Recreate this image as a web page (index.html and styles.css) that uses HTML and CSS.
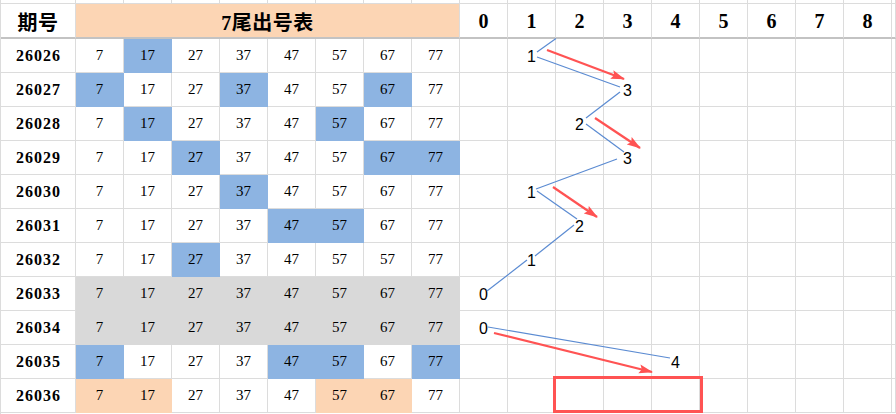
FILE: index.html
```html
<!DOCTYPE html>
<html lang="zh">
<head>
<meta charset="utf-8">
<title>7尾出号表</title>
<link rel="stylesheet" href="styles.css">
</head>
<body>
<div class="page">
  <div class="sheet">
    <div class="c t"></div><div class="c t"></div><div class="c t"></div><div class="c t"></div><div class="c t"></div><div class="c t"></div><div class="c t"></div><div class="c t"></div><div class="c t"></div><div class="c t"></div><div class="c t"></div><div class="c t"></div><div class="c t"></div><div class="c t"></div><div class="c t"></div><div class="c t"></div><div class="c t"></div><div class="c t"></div><div class="c t"></div>

    <div class="c h hz">期号</div><div class="c h hz o ttl">7尾出号表</div><div class="c h">0</div><div class="c h">1</div><div class="c h">2</div><div class="c h">3</div><div class="c h">4</div><div class="c h">5</div><div class="c h">6</div><div class="c h">7</div><div class="c h">8</div><div class="c h"></div>

    <div class="c lbl">26026</div><div class="c n">7</div><div class="c n b">17</div><div class="c n">27</div><div class="c n">37</div><div class="c n">47</div><div class="c n">57</div><div class="c n">67</div><div class="c n">77</div><div class="c ch"></div><div class="c ch">1</div><div class="c ch"></div><div class="c ch"></div><div class="c ch"></div><div class="c ch"></div><div class="c ch"></div><div class="c ch"></div><div class="c ch"></div><div class="c"></div>

    <div class="c lbl">26027</div><div class="c n b">7</div><div class="c n">17</div><div class="c n">27</div><div class="c n b">37</div><div class="c n">47</div><div class="c n">57</div><div class="c n b">67</div><div class="c n">77</div><div class="c ch"></div><div class="c ch"></div><div class="c ch"></div><div class="c ch">3</div><div class="c ch"></div><div class="c ch"></div><div class="c ch"></div><div class="c ch"></div><div class="c ch"></div><div class="c"></div>

    <div class="c lbl">26028</div><div class="c n">7</div><div class="c n b">17</div><div class="c n">27</div><div class="c n">37</div><div class="c n">47</div><div class="c n b">57</div><div class="c n">67</div><div class="c n">77</div><div class="c ch"></div><div class="c ch"></div><div class="c ch">2</div><div class="c ch"></div><div class="c ch"></div><div class="c ch"></div><div class="c ch"></div><div class="c ch"></div><div class="c ch"></div><div class="c"></div>

    <div class="c lbl">26029</div><div class="c n">7</div><div class="c n">17</div><div class="c n b">27</div><div class="c n">37</div><div class="c n">47</div><div class="c n">57</div><div class="c n b">67</div><div class="c n b">77</div><div class="c ch"></div><div class="c ch"></div><div class="c ch"></div><div class="c ch">3</div><div class="c ch"></div><div class="c ch"></div><div class="c ch"></div><div class="c ch"></div><div class="c ch"></div><div class="c"></div>

    <div class="c lbl">26030</div><div class="c n">7</div><div class="c n">17</div><div class="c n">27</div><div class="c n b">37</div><div class="c n">47</div><div class="c n">57</div><div class="c n">67</div><div class="c n">77</div><div class="c ch"></div><div class="c ch">1</div><div class="c ch"></div><div class="c ch"></div><div class="c ch"></div><div class="c ch"></div><div class="c ch"></div><div class="c ch"></div><div class="c ch"></div><div class="c"></div>

    <div class="c lbl">26031</div><div class="c n">7</div><div class="c n">17</div><div class="c n">27</div><div class="c n">37</div><div class="c n b">47</div><div class="c n b">57</div><div class="c n">67</div><div class="c n">77</div><div class="c ch"></div><div class="c ch"></div><div class="c ch">2</div><div class="c ch"></div><div class="c ch"></div><div class="c ch"></div><div class="c ch"></div><div class="c ch"></div><div class="c ch"></div><div class="c"></div>

    <div class="c lbl">26032</div><div class="c n">7</div><div class="c n">17</div><div class="c n b">27</div><div class="c n">37</div><div class="c n">47</div><div class="c n">57</div><div class="c n">57</div><div class="c n">77</div><div class="c ch"></div><div class="c ch">1</div><div class="c ch"></div><div class="c ch"></div><div class="c ch"></div><div class="c ch"></div><div class="c ch"></div><div class="c ch"></div><div class="c ch"></div><div class="c"></div>

    <div class="c lbl">26033</div><div class="c n g">7</div><div class="c n g">17</div><div class="c n g">27</div><div class="c n g">37</div><div class="c n g">47</div><div class="c n g">57</div><div class="c n g">67</div><div class="c n g">77</div><div class="c ch">0</div><div class="c ch"></div><div class="c ch"></div><div class="c ch"></div><div class="c ch"></div><div class="c ch"></div><div class="c ch"></div><div class="c ch"></div><div class="c ch"></div><div class="c"></div>

    <div class="c lbl">26034</div><div class="c n g">7</div><div class="c n g">17</div><div class="c n g">27</div><div class="c n g">37</div><div class="c n g">47</div><div class="c n g">57</div><div class="c n g">67</div><div class="c n g">77</div><div class="c ch">0</div><div class="c ch"></div><div class="c ch"></div><div class="c ch"></div><div class="c ch"></div><div class="c ch"></div><div class="c ch"></div><div class="c ch"></div><div class="c ch"></div><div class="c"></div>

    <div class="c lbl">26035</div><div class="c n b">7</div><div class="c n">17</div><div class="c n">27</div><div class="c n">37</div><div class="c n b">47</div><div class="c n b">57</div><div class="c n">67</div><div class="c n b">77</div><div class="c ch"></div><div class="c ch"></div><div class="c ch"></div><div class="c ch"></div><div class="c ch">4</div><div class="c ch"></div><div class="c ch"></div><div class="c ch"></div><div class="c ch"></div><div class="c"></div>

    <div class="c lbl">26036</div><div class="c n o">7</div><div class="c n o">17</div><div class="c n">27</div><div class="c n">37</div><div class="c n">47</div><div class="c n o">57</div><div class="c n o">67</div><div class="c n">77</div><div class="c ch"></div><div class="c ch"></div><div class="c ch"></div><div class="c ch"></div><div class="c ch"></div><div class="c ch"></div><div class="c ch"></div><div class="c ch"></div><div class="c ch"></div><div class="c"></div>
  </div>

  <svg class="overlay" width="896" height="414" viewBox="0 0 896 414" xmlns="http://www.w3.org/2000/svg">
    <defs>
      <marker id="ah" markerUnits="userSpaceOnUse" markerWidth="14" markerHeight="10" refX="13" refY="5" orient="auto">
        <path d="M0,0.5 L14,5 L0,9.5 L2.5,5 Z" fill="#ff5353"/>
      </marker>
    </defs>
    <g class="trend" fill="none" stroke="#5b8bd2" stroke-width="1.2">
      <line x1="537" y1="52" x2="556" y2="38.5"/>
      <line x1="537" y1="57" x2="620" y2="87"/>
      <line x1="620" y1="92" x2="586" y2="118"/>
      <line x1="586" y1="124" x2="624" y2="152"/>
      <line x1="617" y1="159" x2="536" y2="189"/>
      <line x1="537" y1="191" x2="577" y2="219"/>
      <line x1="574" y1="225" x2="535" y2="256"/>
      <line x1="527" y1="260" x2="487" y2="291"/>
      <line x1="488" y1="327" x2="670" y2="358"/>
    </g>
    <g class="arrows" fill="none" stroke="#ff5353" stroke-width="2.2" stroke-linecap="butt">
      <line x1="547" y1="50" x2="624" y2="79" marker-end="url(#ah)"/>
      <line x1="595" y1="118" x2="640" y2="148" marker-end="url(#ah)"/>
      <line x1="553" y1="187" x2="597" y2="217" marker-end="url(#ah)"/>
      <line x1="494" y1="333" x2="652" y2="372" marker-end="url(#ah)"/>
      <rect x="554.5" y="377.5" width="147" height="34" stroke-width="3"/>
    </g>
  </svg>
</div>
</body>
</html>
```

FILE: styles.css
```css
html, body {
  margin: 0;
  padding: 0;
  background: #ffffff;
}

.page {
  position: relative;
  width: 896px;
  height: 414px;
  overflow: hidden;
}

.sheet {
  display: grid;
  grid-template-columns: 75px repeat(17, 48px) 1fr;
  grid-template-rows: 4px 35px repeat(11, 34px) 1fr;
  width: 896px;
  height: 414px;
  box-sizing: border-box;
  border-left: 1px solid #dcdcdc;
  color: #000;
}

.c {
  box-sizing: border-box;
  border-right: 1px solid #dcdcdc;
  border-bottom: 1px solid #dcdcdc;
  display: flex;
  align-items: center;
  justify-content: center;
  overflow: hidden;
  background: #fff;
}

.h {
  border-bottom: 2px solid #c3c3c3;
  font-family: "Liberation Serif", serif;
  font-weight: bold;
  font-size: 20px;
  padding-top: 1px;
}

.hz {
  font-family: "Liberation Serif", "Noto Sans CJK SC", sans-serif;
  font-size: 20px;
  letter-spacing: 0.5px;
}

.ttl {
  grid-column: span 8;
}

.lbl {
  font-family: "Liberation Serif", serif;
  font-weight: bold;
  font-size: 16px;
  letter-spacing: 1px;
  padding-left: 1px;
}

.n {
  font-family: "Liberation Serif", serif;
  font-size: 15px;
}

.ch {
  font-family: "Liberation Sans", sans-serif;
  font-size: 16px;
  padding-top: 2px;
}

.b {
  background: #8db4e2;
  border-right-color: #8db4e2;
  border-bottom-color: #8db4e2;
}

.g {
  background: #d9d9d9;
  border-right-color: #d9d9d9;
  border-bottom-color: #d9d9d9;
}

.o {
  background: #fcd5b4;
  border-bottom-color: #fcd5b4;
}

.h.o {
  border-bottom-color: #c3c3c3;
}

.n.o {
  border-right-color: #fcd5b4;
}

.overlay {
  position: absolute;
  left: 0;
  top: 0;
  pointer-events: none;
}
```
